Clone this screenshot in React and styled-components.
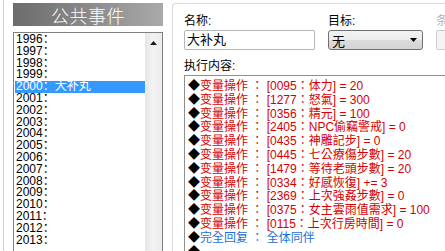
import React from "react";
import styled, { createGlobalStyle } from "styled-components";

const Global = createGlobalStyle`
  html, body { margin: 0; padding: 0; background: #fff; }
  body {
    width: 445px; height: 251px; overflow: hidden;
    font-family: "Liberation Sans", "Noto Sans CJK SC", sans-serif;
  }
`;

const Window = styled.div`
  display: flex;
  width: 445px;
  height: 251px;
  overflow: hidden;
  background: #fff;
`;

const LeftPane = styled.div`
  flex: none;
  width: 150px;
  margin: 0 9px 0 3px;
  padding: 3px 0 0 9px;
  border-left: 1px solid #d0d0d0;
  display: flex;
  flex-direction: column;
  gap: 6px;
`;

const Header = styled.div`
  height: 23px;
  display: flex;
  align-items: center;
  justify-content: center;
  background: linear-gradient(to right, #6c6c6c, #8a8a8a 50%, #a9a9a9);
  color: #fff;
  font-family: "Noto Sans CJK SC", sans-serif;
  font-size: 18px;
  font-weight: 300;
  letter-spacing: 0.5px;
`;

const ListBox = styled.div`
  flex: 1;
  display: flex;
  min-height: 0;
  border: 1px solid #7f7f7f;
  border-bottom: none;
  overflow: hidden;
`;

const Items = styled.div`
  flex: 1;
  padding: 1px 0 0 1px;
  display: flex;
  flex-direction: column;
`;

const Item = styled.div`
  height: 11.8px;
  line-height: 11.8px;
  font-size: 12px;
  color: ${(p) => (p.$selected ? "#fff" : "#000")};
  background: ${(p) => (p.$selected ? "#3399ff" : "transparent")};
  white-space: pre;
  padding-left: 1px;
  flex: none;
`;

const ScrollBar = styled.div`
  flex: none;
  width: 17px;
  background: linear-gradient(to right, #e6e6e6, #f3f3f3 45%, #ebebeb);
  display: flex;
  justify-content: center;
  padding-top: 8px;
  box-sizing: border-box;
`;

const RightPane = styled.div`
  flex: 1;
  min-width: 0;
  margin-top: 3px;
  border-top: 1px solid #d9d9d9;
  border-left: 1px solid #d9d9d9;
  border-top-left-radius: 4px;
  padding: 10px 0 0 11px;
  display: flex;
  flex-direction: column;
  overflow: hidden;
`;

const FieldRow = styled.div`
  display: flex;
  gap: 13px;
  width: 300px;
`;

const Field = styled.div`
  flex: none;
  width: ${(p) => p.$w}px;
  display: flex;
  flex-direction: column;
  gap: 2px;
`;

const Label = styled.div`
  height: 14px;
  line-height: 14px;
  font-size: 12px;
  color: ${(p) => (p.$disabled ? "#b4b4b4" : "#000")};
  white-space: pre;
`;

const TextInput = styled.div`
  height: 20px;
  box-sizing: border-box;
  border: 1px solid ${(p) => (p.$disabled ? "#cdcdcd" : "#b5b7bc")};
  border-radius: 2px;
  background: ${(p) => (p.$disabled ? "#f4f4f4" : "#fff")};
  padding: 0 2px;
  font-size: 13px;
  line-height: 18px;
  color: #000;
`;

const Select = styled.div`
  height: 20px;
  box-sizing: border-box;
  border: 1px solid #707070;
  border-radius: 3px;
  background: linear-gradient(#f3f3f3, #ebebeb 50%, #dcdcdc 51%, #d4d4d4);
  padding: 0 5px 0 3px;
  display: flex;
  align-items: center;
  justify-content: space-between;
  font-size: 13px;
  color: #000;
`;

const ContentLabel = styled(Label)`
  margin-top: 9px;
`;

const ScriptBox = styled.div`
  flex: 1;
  margin-top: 2px;
  width: 300px;
  border-top: 1px solid #8e8f8f;
  border-left: 1px solid #8e8f8f;
  padding: 2px 0 0 3px;
  background: #fff;
  font-family: "Liberation Sans", "Noto Sans CJK TC", sans-serif;
`;

const Line = styled.div`
  height: 13.8px;
  line-height: 13.8px;
  font-size: 12px;
  white-space: pre;
  color: ${(p) => (p.$tone === "blue" ? "#1d6fd2" : "#d60000")};
`;

const Diamond = styled.span`
  font-family: "Noto Sans CJK SC", sans-serif;
  color: #000;
`;

const years = [];
for (let y = 1996; y <= 2013; y++) years.push(y);

const ops = [
  "[0095：体力] = 20",
  "[1277：怒氣] = 300",
  "[0356：精元] = 100",
  "[2405：NPC偷竊警戒] = 0",
  "[0435：神雕記步] = 0",
  "[0445：七公療傷步數] = 20",
  "[1479：等待老頭步數] = 20",
  "[0334：好感恢復] += 3",
  "[2369：上次強姦步數] = 0",
  "[0375：女主雲雨值需求] = 100",
  "[0115：上次行房時間] = 0",
];

export default function App() {
  return (
    <>
      <Global />
      <Window>
        <LeftPane>
          <Header>公共事件</Header>
          <ListBox>
            <Items>
              {years.map((y) => (
                <Item key={y} $selected={y === 2000}>
                  {y}：{y === 2000 ? "大补丸" : ""}
                </Item>
              ))}
            </Items>
            <ScrollBar>
              <svg width="7" height="4" viewBox="0 0 7 4">
                <path d="M3.5 0 L7 4 L0 4 Z" fill="#1a1a1a" />
              </svg>
            </ScrollBar>
          </ListBox>
        </LeftPane>
        <RightPane>
          <FieldRow>
            <Field $w={131}>
              <Label>名称:</Label>
              <TextInput>大补丸</TextInput>
            </Field>
            <Field $w={95}>
              <Label>目标:</Label>
              <Select>
                <span>无</span>
                <svg width="7" height="4" viewBox="0 0 7 4">
                  <path d="M0 0 L7 0 L3.5 4 Z" fill="#000" />
                </svg>
              </Select>
            </Field>
            <Field $w={60}>
              <Label $disabled>条件:</Label>
              <TextInput $disabled />
            </Field>
          </FieldRow>
          <ContentLabel>执行内容:</ContentLabel>
          <ScriptBox>
            {ops.map((o) => (
              <Line key={o}>
                <Diamond>◆</Diamond>变量操作 ： {o}
              </Line>
            ))}
            <Line $tone="blue">
              <Diamond>◆</Diamond>完全回复 ： 全体同伴
            </Line>
            <Line>
              <Diamond>◆</Diamond>
            </Line>
          </ScriptBox>
        </RightPane>
      </Window>
    </>
  );
}
